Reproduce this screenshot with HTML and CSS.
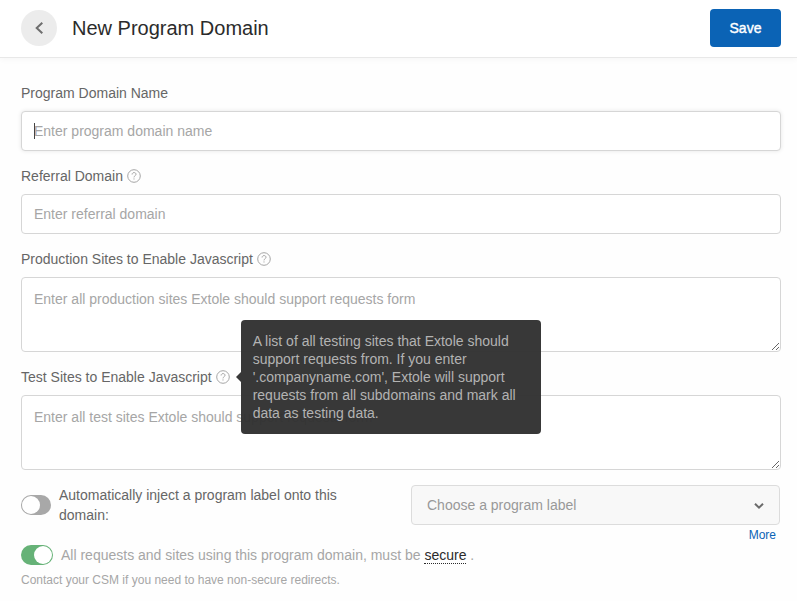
FILE: index.html
```html
<!DOCTYPE html>
<html lang="en">
<head>
<meta charset="utf-8">
<meta name="viewport" content="width=device-width, initial-scale=1">
<title>New Program Domain</title>
<link rel="stylesheet" href="styles.css">
</head>
<body>
<header class="header">
  <button class="back" type="button" aria-label="Back">
    <svg width="36" height="36" viewBox="0 0 36 36" fill="none" stroke="#6e6e6e" stroke-width="2"><path d="M21.3 12.7 L15.7 18 L21.3 23.3"/></svg>
  </button>
  <h1 class="title">New Program Domain</h1>
  <button class="save" type="submit" form="domain-form">Save</button>
</header>
<main>
  <form class="form" id="domain-form">
    <div class="field">
      <div class="label-row"><label for="name">Program Domain Name</label></div>
      <div class="input-wrap has-caret"><input class="control active" id="name" type="text" placeholder="Enter program domain name"></div>
    </div>
    <div class="field">
      <div class="label-row">
        <label for="referral">Referral Domain</label>
        <span class="help"><svg width="14" height="14" viewBox="0 0 14 14" fill="none" stroke="#a6a6a6"><circle cx="7" cy="7" r="6.3"/><path d="M5.1 5.5 C5.1 2.9 9 3 9 5.3 C9 6.7 7 6.7 7 8.4 M7 9.4 V10.5"/></svg></span>
      </div>
      <input class="control" id="referral" type="text" placeholder="Enter referral domain">
    </div>
    <div class="field">
      <div class="label-row">
        <label for="production">Production Sites to Enable Javascript</label>
        <span class="help"><svg width="14" height="14" viewBox="0 0 14 14" fill="none" stroke="#a6a6a6"><circle cx="7" cy="7" r="6.3"/><path d="M5.1 5.5 C5.1 2.9 9 3 9 5.3 C9 6.7 7 6.7 7 8.4 M7 9.4 V10.5"/></svg></span>
      </div>
      <textarea class="control area" id="production" placeholder="Enter all production sites Extole should support requests form"></textarea>
    </div>
    <div class="field">
      <div class="label-row">
        <label for="test">Test Sites to Enable Javascript</label>
        <span class="help" aria-describedby="test-tip"><svg width="14" height="14" viewBox="0 0 14 14" fill="none" stroke="#a6a6a6"><circle cx="7" cy="7" r="6.3"/><path d="M5.1 5.5 C5.1 2.9 9 3 9 5.3 C9 6.7 7 6.7 7 8.4 M7 9.4 V10.5"/></svg>
          <span class="tooltip" id="test-tip" role="tooltip">A list of all testing sites that Extole should support requests from. If you enter '.companyname.com', Extole will support requests from all subdomains and mark all data as testing data.</span>
        </span>
      </div>
      <textarea class="control area" id="test" placeholder="Enter all test sites Extole should support requests form"></textarea>
    </div>
    <div class="inject">
      <div class="inject-option">
        <input class="toggle" id="inject" type="checkbox" role="switch">
        <label for="inject">Automatically inject a program label onto this domain:</label>
      </div>
      <div class="inject-label">
        <div class="select-wrap">
          <select class="select" aria-label="Program label" disabled>
            <option>Choose a program label</option>
          </select>
          <svg class="chevron" width="12" height="8" viewBox="0 0 12 8" fill="none" stroke="#6b6b6b" stroke-width="2"><path d="M2 1.7 L6 5.7 L10 1.7"/></svg>
        </div>
        <a class="more" href="#">More</a>
      </div>
    </div>
    <div class="secure-row">
      <input class="toggle wide" id="secure" type="checkbox" role="switch" checked disabled>
      <label for="secure">All requests and sites using this program domain, must be <abbr class="secure">secure</abbr> .</label>
    </div>
    <p class="note">Contact your CSM if you need to have non-secure redirects.</p>
  </form>
</main>
</body>
</html>
```
FILE: styles.css
```css
* {
  box-sizing: border-box;
}

body {
  margin: 0;
  background: #fefefe;
  color: #666;
  font: 14px/20px "Liberation Sans", Arial, sans-serif;
}

button,
input,
textarea,
select {
  font: inherit;
}

.header {
  display: flex;
  align-items: center;
  padding: 9px 16px 10px 21px;
  border-bottom: 1px solid #e8e8e8;
  box-shadow: 0 2px 6px rgba(0, 0, 0, 0.03);
  background: #fff;
}

.back {
  width: 36px;
  height: 36px;
  padding: 0;
  border: 0;
  border-radius: 50%;
  background: #ececec;
}

.back svg {
  display: block;
}

.title {
  flex: 1;
  margin: 0 0 0 15px;
  color: #2b2b2b;
  font-size: 20px;
  font-weight: 400;
  line-height: 24px;
}

.save {
  min-width: 71px;
  height: 38px;
  padding: 0 16px;
  border: 0;
  border-radius: 4px;
  background: #0b63b5;
  color: #fff;
  font-size: 14px;
  -webkit-text-stroke: 0.4px #fff;
}

.form {
  padding: 25px 16px 11px 21px;
}

.field {
  margin-bottom: 15px;
}

.label-row {
  display: flex;
  align-items: center;
  gap: 4px;
  margin-bottom: 8px;
}

.help {
  position: relative;
  display: block;
  height: 14px;
}

.help svg {
  display: block;
}

.control {
  display: block;
  width: 100%;
  height: 40px;
  padding: 0 12px;
  border: 1px solid #d6d6d6;
  border-radius: 4px;
  background: #fff;
  color: #444;
  outline: 0;
}

.control::placeholder {
  color: #a6a6a6;
}

.active {
  box-shadow: 0 0 4px rgba(0, 0, 0, 0.1);
}

.area {
  height: 75px;
  padding: 11px 12px;
  resize: vertical;
}

.input-wrap {
  position: relative;
}

.has-caret::after {
  content: "";
  position: absolute;
  top: 12px;
  left: 13px;
  width: 1px;
  height: 16px;
  background: #444;
}

.tooltip {
  position: absolute;
  z-index: 1;
  top: 50%;
  left: calc(100% + 11px);
  width: 300px;
  padding: 12px;
  border-radius: 4px;
  background: rgba(48, 48, 48, 0.96);
  color: #b3b3b3;
  line-height: 18px;
  transform: translateY(-50%);
}

.tooltip::before {
  content: "";
  position: absolute;
  top: 50%;
  right: 100%;
  margin-top: -5px;
  border: 5px solid transparent;
  border-left-width: 0;
  border-right-color: #383838;
}

.inject {
  display: grid;
  grid-template-columns: 1fr 369px;
  margin-right: 1px;
}

.inject-option {
  display: flex;
  align-items: center;
  align-self: start;
  gap: 8px;
  padding-right: 60px;
}

.toggle {
  flex: none;
  display: flex;
  width: 30px;
  height: 20px;
  margin: 0;
  padding: 1px;
  border-radius: 10px;
  background: #a8a8a8;
  appearance: none;
}

.toggle::before {
  content: "";
  width: 18px;
  height: 18px;
  border-radius: 50%;
  background: #fff;
}

.toggle:checked {
  justify-content: flex-end;
  background: #66b277;
}

.wide {
  width: 32px;
}

.select-wrap {
  position: relative;
}

.select {
  display: block;
  width: 100%;
  height: 40px;
  padding: 0 36px 0 15px;
  border: 1px solid #dcdcdc;
  border-radius: 4px;
  background: #f8f8f8;
  color: #999;
  opacity: 1;
  appearance: none;
}

.chevron {
  position: absolute;
  top: 17px;
  right: 15px;
}

.more {
  display: block;
  width: fit-content;
  margin-left: auto;
  padding-right: 4px;
  color: #0b63b5;
  font-size: 12px;
  text-decoration: none;
}

.secure-row {
  display: flex;
  align-items: center;
  gap: 8px;
  color: #a6a6a6;
}

.secure {
  border-bottom: 1px dotted #2b2b2b;
  color: #2b2b2b;
}

.note {
  margin: 5px 0 0;
  color: #a6a6a6;
  font-size: 12px;
}
```
